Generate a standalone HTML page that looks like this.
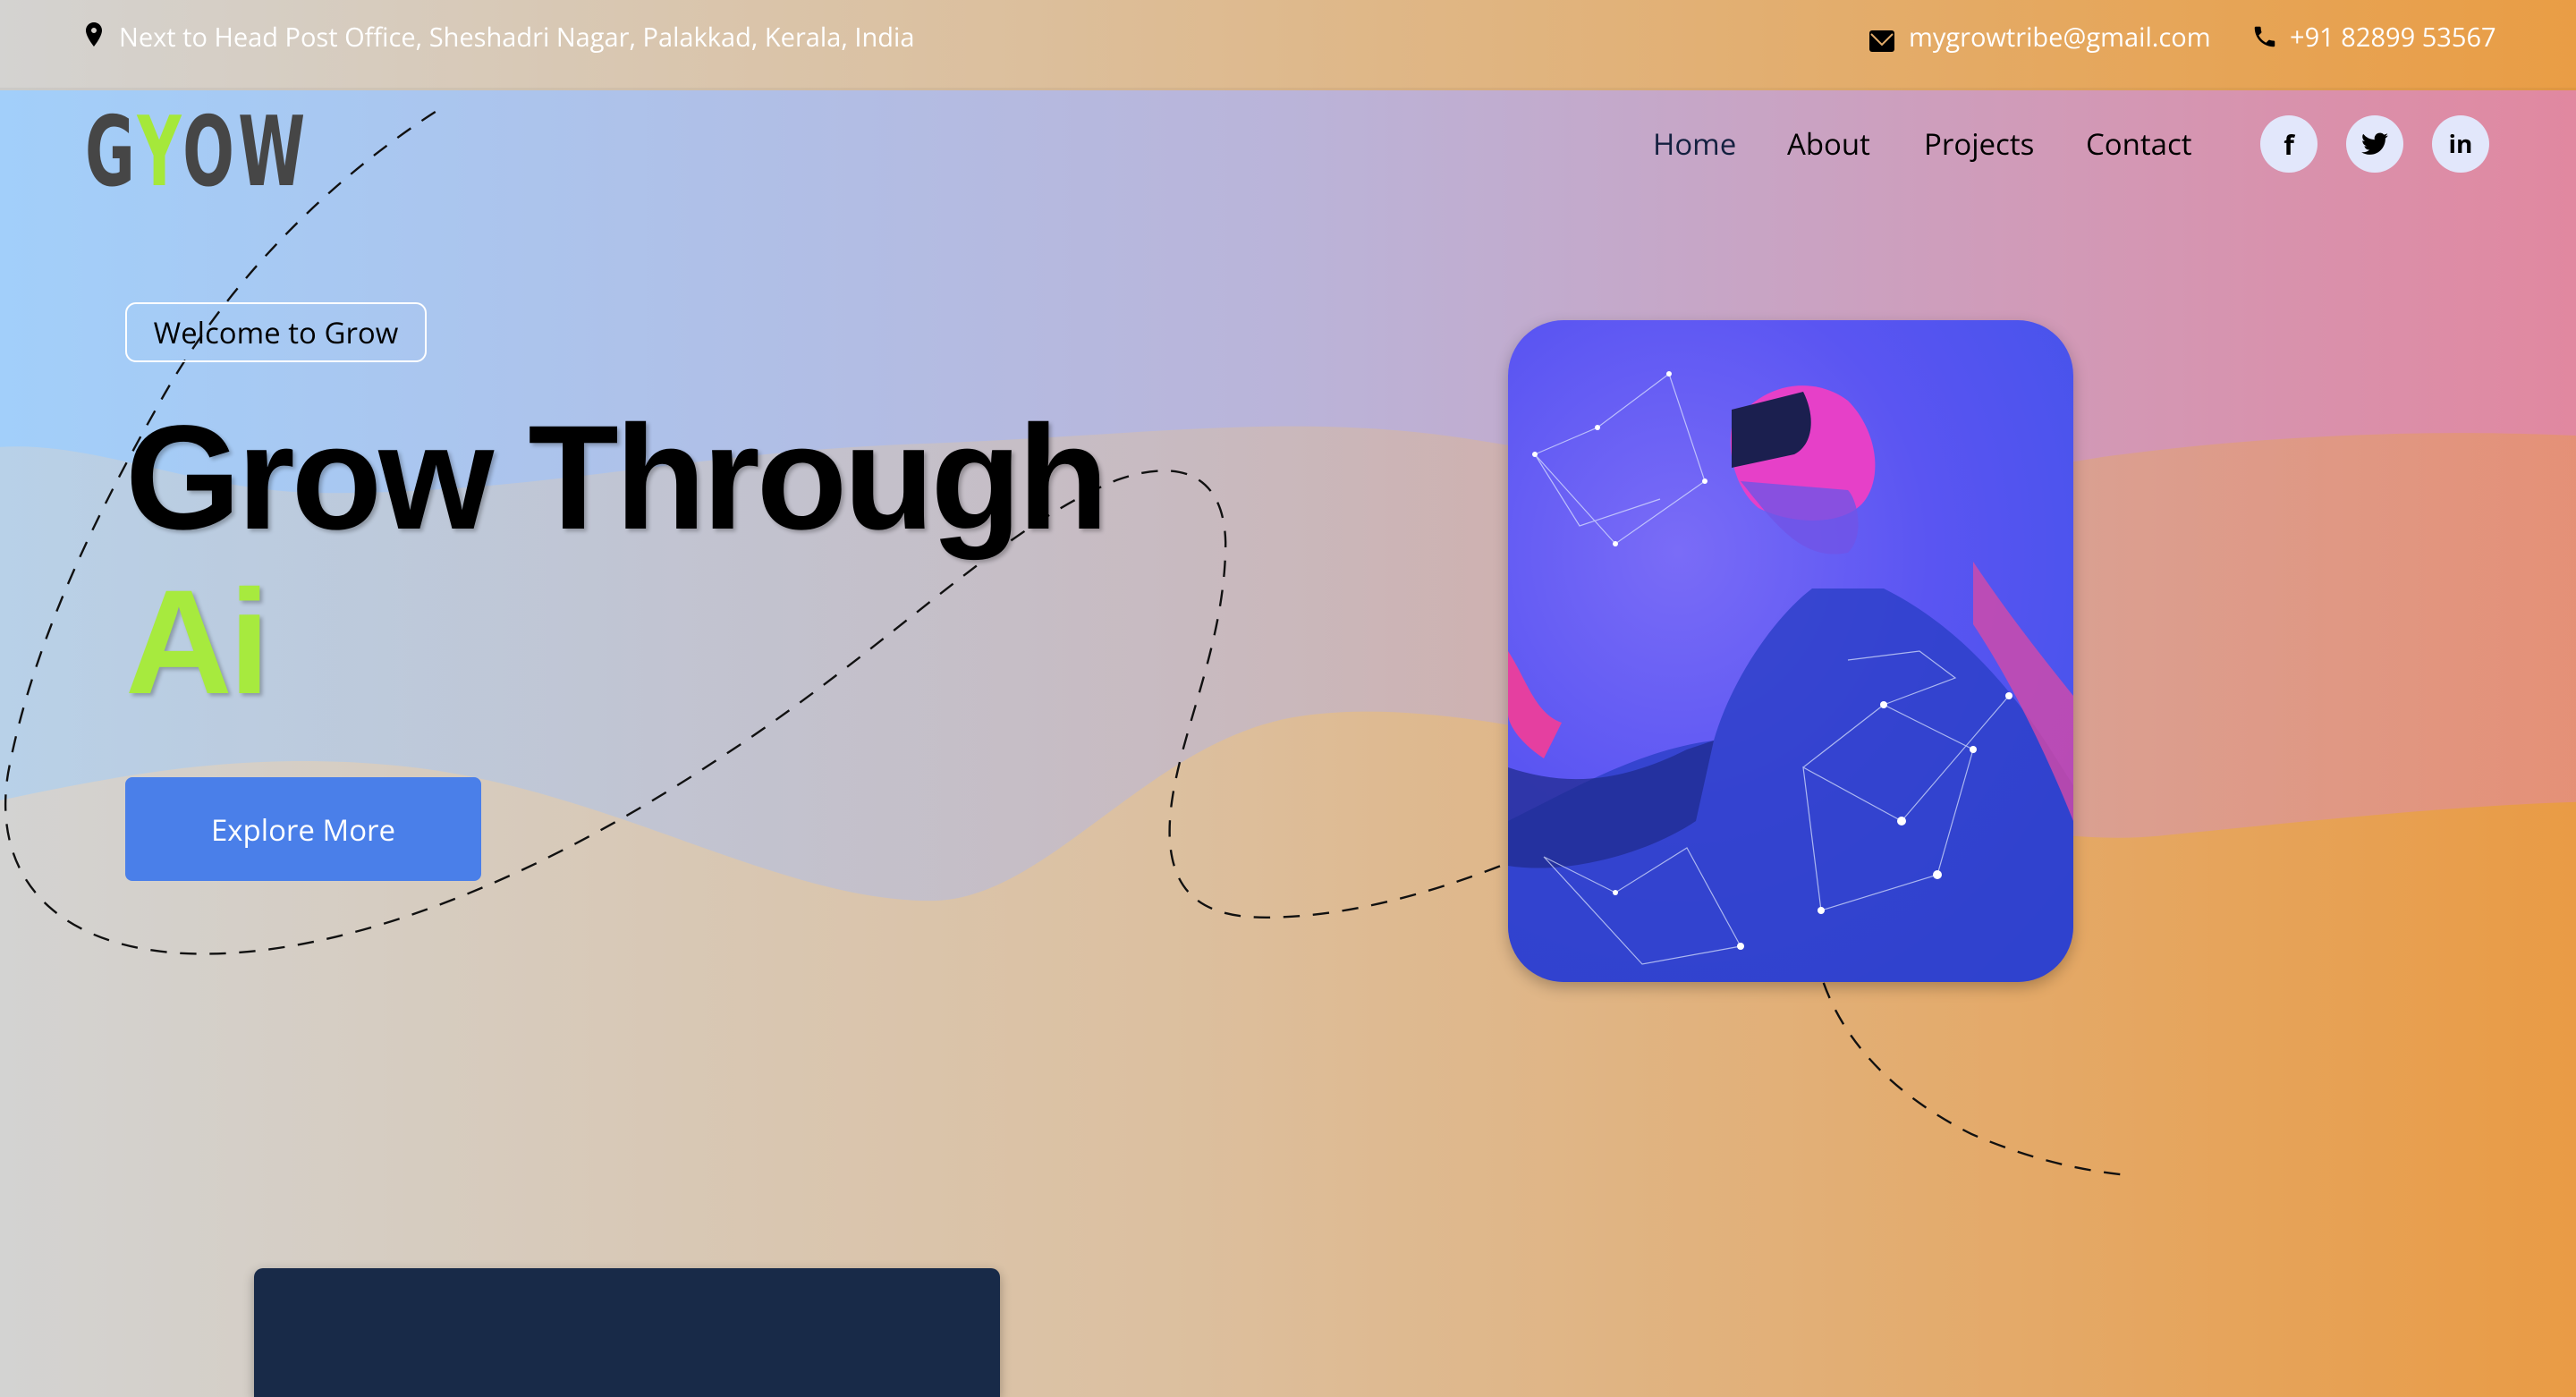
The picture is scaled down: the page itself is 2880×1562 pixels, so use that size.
<!DOCTYPE html>
<html><head><meta charset="utf-8"><style>
*{margin:0;padding:0;box-sizing:border-box}
html,body{width:2880px;height:1562px;overflow:hidden;font-family:"Open Sans","Liberation Sans",sans-serif;position:relative}
#bg{position:absolute;left:0;top:0;width:2880px;height:1562px}
.top{position:absolute;left:0;top:0;width:2880px;height:101px;background:linear-gradient(90deg,#d4d3d1,#dcbf9c 40%,#e5a85f 80%,#e99d45);border-bottom:3px solid rgba(0,0,0,0.04)}
.top span{position:absolute;top:22px;color:#fff;font-size:29px}
.logo{position:absolute;left:95px;top:108px;font-family:"DejaVu Sans Condensed","Liberation Sans Narrow","Liberation Sans",sans-serif;font-weight:bold;font-size:108px;color:#464646;letter-spacing:6px;transform:scaleX(0.7);transform-origin:left;white-space:nowrap}
.nav{position:absolute;top:138px;font-size:33px;color:#000}
.soc{position:absolute;top:129px;width:64px;height:64px;border-radius:50%;background:#e2e7fb;display:flex;align-items:center;justify-content:center;font-weight:bold;font-size:30px;color:#000}
.welcome{position:absolute;left:140px;top:338px;width:337px;height:67px;border:2px solid #fff;border-radius:12px;font-size:33px;display:flex;align-items:center;justify-content:center;color:#000}
h1{position:absolute;left:140px;top:440px;font-family:"Liberation Sans",Arial,sans-serif;font-weight:bold;font-size:166px;color:#000;letter-spacing:-4px;white-space:nowrap;text-shadow:3px 3px 4px rgba(0,0,0,.25)}
.ai{position:absolute;left:140px;top:624px;font-family:"Liberation Sans",Arial,sans-serif;font-weight:bold;font-size:166px;color:#a7ea3e;letter-spacing:-4px;text-shadow:3px 3px 4px rgba(0,0,0,.25)}
.btn{position:absolute;left:140px;top:869px;width:398px;height:116px;background:#4a7fe9;border-radius:8px;color:#fff;font-size:33px;display:flex;align-items:center;justify-content:center}
.card{position:absolute;left:1686px;top:358px;width:632px;height:740px;border-radius:62px;overflow:hidden;background:radial-gradient(ellipse at 30% 35%,#7a6cf7,#5a55f2 45%,#3e52e8 100%);box-shadow:0 6px 16px rgba(0,0,0,.25)}
.dark{position:absolute;left:284px;top:1418px;width:834px;height:144px;border-radius:10px 10px 0 0;background:#182a48;box-shadow:0 4px 12px rgba(0,0,0,.3)}
</style></head><body>
<svg id="bg" viewBox="0 0 1568 850" preserveAspectRatio="none">
<defs>
<linearGradient id="g1" x1="0" x2="1"><stop offset="0" stop-color="#a2cffa"/><stop offset=".5" stop-color="#bab4d9"/><stop offset="1" stop-color="#e188a0"/></linearGradient>
<linearGradient id="g2" x1="0" x2="1"><stop offset="0" stop-color="#d3d3d2"/><stop offset=".45" stop-color="#dcc0a0"/><stop offset="1" stop-color="#e99b45"/></linearGradient>
</defs>
<rect width="1568" height="850" fill="url(#g1)"/>
<path d="M0 272 C60 268 120 300 200 300 C330 300 420 275 560 270 C700 265 790 250 900 268 C1050 292 1150 300 1280 278 C1400 262 1500 262 1568 265 L1568 850 L0 850Z" fill="url(#g2)" opacity=".45"/>
<path d="M0 487 C80 470 160 455 260 468 C380 485 480 550 570 548 C640 545 700 450 790 436 C880 422 1000 460 1100 480 C1200 500 1260 515 1320 508 C1420 498 1500 490 1568 488 L1568 850 L0 850Z" fill="url(#g2)"/>
<path d="M265 68 C200 110 140 170 100 240 C60 310 20 390 5 470 C-5 530 30 575 110 580 C200 585 320 540 440 460 C540 395 610 320 680 292 C720 278 745 290 746 330 C746 400 710 460 712 510 C714 550 740 560 780 558 C830 556 880 540 918 525" fill="none" stroke="#111" stroke-width="1.3" stroke-dasharray="10 8"/>
<path d="M1110 598 C1125 640 1160 670 1200 690 C1235 705 1265 712 1295 715" fill="none" stroke="#111" stroke-width="1.3" stroke-dasharray="10 8"/>
</svg>
<div class="top">
<span style="left:95px;top:24px"><svg width="20" height="30" viewBox="0 0 20 30"><path d="M10 1C5 1 1 5 1 10c0 7 9 18 9 18s9-11 9-18c0-5-4-9-9-9zm0 12a3 3 0 110-6 3 3 0 010 6z" fill="#000"/></svg></span>
<span style="left:133px">Next to Head Post Office, Sheshadri Nagar, Palakkad, Kerala, India</span>
<span style="left:2090px;top:28px"><svg width="28" height="24" viewBox="0 0 28 24"><rect x="0" y="0" width="28" height="24" rx="3" fill="#000"/><path d="M2 4 L14 16 L26 4" stroke="#e3ac6a" stroke-width="2" fill="none"/></svg></span>
<span style="left:2134px">mygrowtribe@gmail.com</span>
<span style="left:2517px;top:26px"><svg width="30" height="30" viewBox="0 0 24 24"><path d="M6.6 10.8c1.4 2.8 3.8 5.1 6.6 6.6l2.2-2.2c.3-.3.7-.4 1-.2 1.1.4 2.300.6 3.6.6.6 0 1 .4 1 1V20c0 .6-.4 1-1 1C10.6 21 3 13.4 3 4c0-.6.4-1 1-1h3.5c.6 0 1 .4 1 1 0 1.3.2 2.5.6 3.6.1.3 0 .7-.2 1z" fill="#000"/></svg></span>
<span style="left:2560px">+91 82899 53567</span>
</div>
<div class="logo">G<span style="color:#a5e83a">Y</span>OW</div>
<div class="nav" style="left:1848px;color:#13203f">Home</div>
<div class="nav" style="left:1998px">About</div>
<div class="nav" style="left:2151px">Projects</div>
<div class="nav" style="left:2332px">Contact</div>
<div class="soc" style="left:2527px">f</div>
<div class="soc" style="left:2623px"><svg width="30" height="26" viewBox="0 0 24 20"><path d="M24 2.4c-.9.4-1.8.6-2.8.8 1-.6 1.8-1.6 2.2-2.7-1 .6-2 1-3.1 1.2A4.900 4.900 0 0011.9 6.2 14 14 0 011.7 1a4.9 4.9 0 001.5 6.6c-.8 0-1.6-.3-2.2-.6 0 2.4 1.7 4.4 3.9 4.8-.7.2-1.5.2-2.2.1.6 2 2.4 3.4 4.6 3.4A9.9 9.9 0 010 17.3 14 14 0 007.5 19.5c9.1 0 14-7.5 14-14v-.6c1-.7 1.8-1.6 2.5-2.5z" fill="#000"/></svg></div>
<div class="soc" style="left:2719px;font-size:28px">in</div>
<div class="welcome">Welcome to Grow</div>
<h1>Grow Through</h1>
<div class="ai">Ai</div>
<div class="btn">Explore More</div>
<div class="card">
<svg width="632" height="740" viewBox="0 0 632 740">
<path d="M0 560 C80 520 150 480 230 470 C250 400 300 330 340 300 L420 300 C480 330 540 380 600 470 L632 520 L632 740 L0 740Z" fill="#2a3fc7" opacity=".8"/>
<path d="M0 500 C60 520 120 520 200 480 L230 470 L210 560 C150 600 60 620 0 610Z" fill="#1e2a8a" opacity=".7"/>
<path d="M250 120 C280 70 340 60 380 90 C410 120 420 170 400 200 C380 230 320 230 280 210 C255 190 245 150 250 120Z" fill="#e640c8"/>
<path d="M250 100 L330 80 C345 110 340 140 320 150 L250 165Z" fill="#1b1f4f"/>
<path d="M260 180 C300 230 330 270 380 260 C400 240 390 200 380 190" fill="#7054e6" opacity=".8"/>
<path d="M0 370 C20 400 30 440 60 450 L40 490 C10 470 0 450 0 440Z" fill="#e53fa0"/>
<path d="M520 270 C560 330 600 380 632 420 L632 560 C600 480 560 400 520 340Z" fill="#d44aa8" opacity=".8"/>
<g stroke="#dfe8ff" stroke-width="1.2" opacity=".7" fill="none">
<path d="M30 150 L100 120 L180 60 L220 180 L120 250 L30 150 L80 230 L170 200"/>
<path d="M330 500 L420 430 L520 480 L480 620 L350 660 L330 500 L440 560 L560 420"/>
<path d="M40 600 L120 640 L200 590 L260 700 L150 720 L40 600"/>
<path d="M380 380 L460 370 L500 400 L420 430"/>
</g>
<g fill="#fff">
<circle cx="100" cy="120" r="3"/><circle cx="180" cy="60" r="3"/><circle cx="220" cy="180" r="3"/><circle cx="120" cy="250" r="3"/><circle cx="30" cy="150" r="3"/><circle cx="420" cy="430" r="4"/><circle cx="520" cy="480" r="4"/><circle cx="480" cy="620" r="5"/><circle cx="350" cy="660" r="4"/><circle cx="440" cy="560" r="5"/><circle cx="560" cy="420" r="4"/><circle cx="120" cy="640" r="3"/><circle cx="260" cy="700" r="4"/>
</g>
</svg>
</div>
<div class="dark"></div>
</body></html>
